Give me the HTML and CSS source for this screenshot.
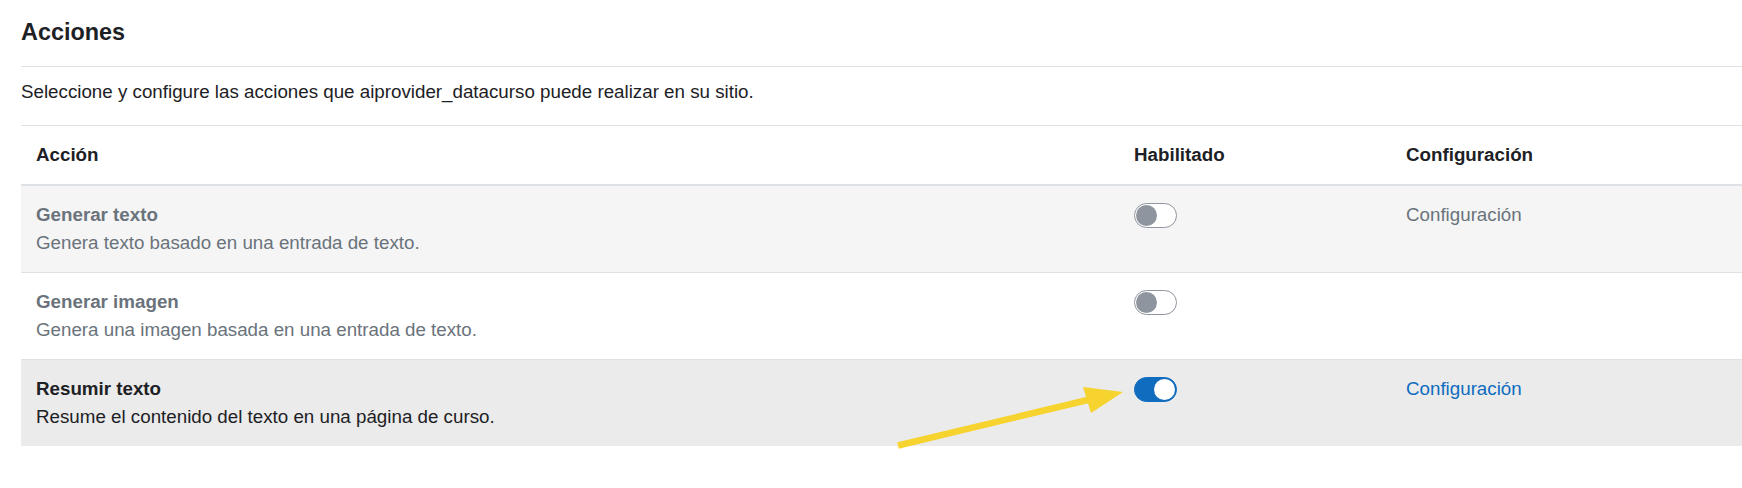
FILE: index.html
```html
<!DOCTYPE html>
<html lang="es">
<head>
<meta charset="utf-8">
<title>Acciones</title>
<link rel="stylesheet" href="styles.css">
</head>
<body>
<div class="page">
  <h3 class="heading">Acciones</h3>
  <hr class="rule">
  <p class="intro">Seleccione y configure las acciones que aiprovider_datacurso puede realizar en su sitio.</p>
  <table class="actions">
    <colgroup>
      <col class="c-action">
      <col class="c-enabled">
      <col class="c-config">
    </colgroup>
    <thead>
      <tr>
        <th>Acción</th>
        <th>Habilitado</th>
        <th>Configuración</th>
      </tr>
    </thead>
    <tbody>
      <tr class="row striped dim">
        <td><div class="title">Generar texto</div><div class="desc">Genera texto basado en una entrada de texto.</div></td>
        <td><span class="switch"><span class="knob"></span></span></td>
        <td><span class="cfg">Configuración</span></td>
      </tr>
      <tr class="row dim">
        <td><div class="title">Generar imagen</div><div class="desc">Genera una imagen basada en una entrada de texto.</div></td>
        <td><span class="switch"><span class="knob"></span></span></td>
        <td></td>
      </tr>
      <tr class="row hover">
        <td><div class="title">Resumir texto</div><div class="desc">Resume el contenido del texto en una página de curso.</div></td>
        <td><span class="switch on"><span class="knob"></span></span></td>
        <td><a class="cfg link" href="#">Configuración</a></td>
      </tr>
    </tbody>
  </table>
  <svg class="arrow" width="1742" height="488" viewBox="0 0 1742 488" aria-hidden="true">
    <line x1="898" y1="445.5" x2="1092" y2="399" stroke="#f6d32f" stroke-width="6.5"/>
    <polygon points="1083,387 1123,392 1091,413" fill="#f6d32f"/>
  </svg>
</div>
</body>
</html>
```

FILE: styles.css
```css
html, body {
  margin: 0;
  padding: 0;
  background: #ffffff;
}

body {
  font-family: "Liberation Sans", Arial, sans-serif;
  color: #1d2125;
  font-size: 18.75px;
  line-height: 1.5;
  overflow: hidden;
}

.page {
  padding: 18px 0 0 21px;
  width: 1721px;
}

.heading {
  margin: 0;
  font-size: 23.4px;
  line-height: 28px;
  font-weight: 700;
  color: #1d2125;
}

.rule {
  margin: 20px 0 0 0;
  border: 0;
  border-top: 1px solid #dee2e6;
  height: 0;
}

.intro {
  margin: 10.5px 0 0 0;
  line-height: 28.1px;
}

.actions {
  margin-top: 19px;
  width: 1721px;
  table-layout: fixed;
  border-collapse: collapse;
  border-top: 1px solid #dee2e6;
}

.c-action { width: 1098px; }
.c-enabled { width: 272px; }
.c-config { width: 351px; }

.actions th {
  text-align: left;
  font-weight: 700;
  padding: 15px;
  line-height: 28.1px;
  border-bottom: 2px solid #dee2e6;
  vertical-align: top;
}

.actions td {
  padding: 15px;
  line-height: 28.1px;
  vertical-align: top;
  border-bottom: 1px solid #dee2e6;
}

.row.striped { background: #f5f5f5; }
.row.hover { background: #ebebeb; }
.row.hover td { border-bottom: 0; }

.title { font-weight: 700; }

.row.dim .title,
.row.dim .desc,
.row.dim .cfg { color: #6a737b; }

.switch {
  display: block;
  position: relative;
  margin-top: 2px;
  width: 43px;
  height: 25px;
  box-sizing: border-box;
  border: 1px solid #8f959e;
  border-radius: 13px;
  background: #ffffff;
}

.switch .knob {
  position: absolute;
  top: 1px;
  left: 1px;
  width: 21px;
  height: 21px;
  border-radius: 50%;
  background: #8f959e;
}

.switch.on {
  background: #0f6cbf;
  border-color: #0f6cbf;
}

.switch.on .knob {
  left: auto;
  right: 1px;
  background: #ffffff;
}

.cfg { color: #6a737b; }

.cfg.link {
  color: #0f6cbf;
  text-decoration: none;
}

.arrow {
  position: absolute;
  left: 0;
  top: 0;
  pointer-events: none;
}
```
